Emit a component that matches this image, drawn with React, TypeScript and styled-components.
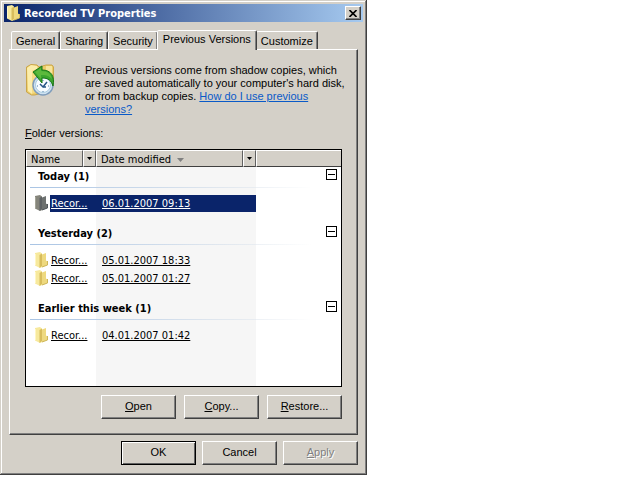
import React, { useState } from "react";
import styled, { createGlobalStyle, css } from "styled-components";

const face = "#d4d0c8";
const ui = '"Liberation Sans", Arial, sans-serif';
const shell = '"DejaVu Sans Condensed", Tahoma, sans-serif';

const GlobalStyle = createGlobalStyle`
  * { box-sizing: border-box; }
  body { margin: 0; background: #fff; color: #000; font: 11px/13px ${ui}; }
  button { font: inherit; color: inherit; }
  svg { flex: none; }
`;

const raised = css`
  border: 1px solid;
  border-color: #fff #404040 #404040 #fff;
  box-shadow: inset -1px -1px #808080;
`;

const Dialog = styled.section`
  max-width: 367px;
  padding: 4px 4px 10px;
  background: ${face};
  box-shadow: inset -1px -1px #404040, inset 1px 1px ${face}, inset -2px -2px #808080, inset 2px 2px #fff;
`;

const TitleBar = styled.header`
  display: flex;
  align-items: center;
  height: 18px;
  padding: 0 2px;
  gap: 3px;
  background: linear-gradient(90deg, #0a246a, #a6caf0);
  color: #fff;
`;

const Title = styled.h1`
  flex: 1;
  margin: 0;
  padding-top: 1px;
  font: bold 11px/18px ${shell};
  white-space: nowrap;
`;

const CloseButton = styled.button`
  ${raised}
  display: grid;
  place-items: center;
  width: 16px;
  height: 14px;
  padding: 0;
  background: ${face};
  color: #000;
`;

const TabStrip = styled.div`
  display: flex;
  align-items: flex-end;
  height: 20px;
  margin: 7px 5px 0;
  padding-left: 2px;
`;

const Tab = styled.button<{ $active: boolean }>`
  position: relative;
  flex: none;
  height: ${(p) => (p.$active ? 20 : 18)}px;
  margin: ${(p) => (p.$active ? "0 -1px -1px" : "0")};
  padding: ${(p) => (p.$active ? "0 5px 2px" : "1px 4px 0")};
  border: 1px solid;
  border-color: #fff #404040 transparent #fff;
  border-bottom-width: 0;
  border-radius: 2px 2px 0 0;
  box-shadow: inset -1px 0 #808080;
  background: ${face};
  z-index: ${(p) => (p.$active ? 1 : 0)};
  white-space: nowrap;
`;

const Panel = styled.div`
  ${raised}
  margin: 0 5px;
  padding: 14px 15px 15px;
`;

const Intro = styled.div`
  display: flex;
  gap: 28px;
  align-items: flex-start;
`;

const IntroText = styled.p`
  flex: 1;
  min-width: 0;
  margin: 0;
  white-space: nowrap;
`;

const HelpLink = styled.a`
  color: #0a5ac8;
`;

const ListLabel = styled.h2`
  margin: 11px 0 9px;
  font: inherit;
`;

const ListBox = styled.div`
  height: 238px;
  border: 1px solid #000;
  background: linear-gradient(90deg, #fff 70px, #f6f6f6 70px, #f6f6f6 230px, #fff 230px);
`;

const Table = styled.table`
  width: 100%;
  table-layout: fixed;
  border-collapse: collapse;
  font: 11px/14px ${shell};
  td, th { padding: 0; text-align: left; }
`;

const Col = styled.col<{ $width?: number }>`
  width: ${(p) => (p.$width ? `${p.$width}px` : "auto")};
`;

const HeaderCell = styled.th`
  height: 17px;
  background: ${face};
  font-weight: normal;
`;

const HeaderParts = styled.div`
  display: flex;
  height: 17px;
`;

const headPart = css`
  height: 17px;
  background: ${face};
  border: 1px solid;
  border-color: #fff #606060 #404040 #fff;
`;

const HeaderButton = styled.button`
  ${headPart}
  display: flex;
  flex: 1;
  align-items: center;
  gap: 6px;
  padding: 2px 4px 0;
`;

const FilterButton = styled.button`
  ${headPart}
  display: grid;
  place-items: center;
  width: 13px;
  padding: 0;
`;

const HeaderFill = styled.div`
  ${headPart}
  border-right: 0;
`;

const GroupHead = styled.th`
  height: 21px;
`;

const GroupBar = styled.div`
  display: flex;
  align-items: center;
  justify-content: space-between;
  height: 21px;
  margin: 0 4px;
  padding: 0 0 1px 8px;
  background: linear-gradient(90deg, #a9c4e4, #dfe6ee 60%, transparent 92%) bottom / 100% 1px no-repeat;
`;

const Toggle = styled.button`
  display: grid;
  place-items: center;
  align-self: flex-start;
  width: 11px;
  height: 11px;
  margin-top: 2px;
  padding: 0;
  border: 1px solid #000;
  background: #fff;
`;

const Gap = styled.td<{ $height: number }>`
  height: ${(p) => p.$height}px;
`;

const VersionRow = styled.tr<{ $selected: boolean }>`
  height: 18px;
  cursor: pointer;
  color: ${(p) => (p.$selected ? "#fff" : "#000")};
`;

const NameCell = styled.div`
  display: flex;
  align-items: center;
  height: 18px;
  padding-left: 8px;
  gap: 1px;
`;

const Mark = styled.span<{ $selected: boolean }>`
  display: flex;
  align-items: center;
  flex: 1;
  height: 17px;
  padding: 2px 0 0 1px;
  background: ${(p) => (p.$selected ? "#0a246a" : "transparent")};
`;

const DateMark = styled(Mark)`
  padding-left: 6px;
`;

const VersionLink = styled.a`
  color: inherit;
  text-underline-offset: 1px;
`;

const ButtonRow = styled.div<{ $gap: number }>`
  display: flex;
  justify-content: flex-end;
  gap: ${(p) => p.$gap}px;
`;

const Actions = styled(ButtonRow)`
  margin-top: 8px;
`;

const Footer = styled(ButtonRow)`
  margin: 6px 5px 0;
`;

const PushButton = styled.button<{ $primary?: boolean }>`
  ${raised}
  width: 75px;
  height: 24px;
  padding: 0 0 2px;
  background: ${face};
  outline: ${(p) => (p.$primary ? "1px solid #000" : "none")};
  outline-offset: -1px;
  ${(p) => p.$primary && "box-shadow: inset 1px 1px #fff, inset -1px -1px #606060;"}
  &:disabled {
    color: #808080;
    text-shadow: 1px 1px #fff;
  }
`;

const FolderIcon = ({ dark = false }: { dark?: boolean }) => {
  const [back, front, edge, shade] = dark
    ? ["#85857c", "#6d7170", "#50565c", "#5d6164"]
    : ["#f7e99d", "#eed97f", "#cdb65a", "#d8bd5c"];
  return (
    <svg width="15" height="16" viewBox="0 0 15 16" aria-hidden="true">
      <path d="M1 1 6 0 8 1.5V13l4-1v1.5L6 16l-5-2.5z" fill={back} />
      <path d="M5.5 3 8 1.5V14l-2.5 2z" fill={shade} />
      <path d="M8 2.5 12 1v7.5l1.5 1V13L8 15z" fill={front} />
      <path d="M1.5 2v11" stroke={dark ? "#a3a396" : "#fff6c3"} />
      <path d="m8 15 5.5-2V9" fill="none" stroke={edge} />
    </svg>
  );
};

const HistoryIcon = () => (
  <svg width="32" height="34" viewBox="0 0 32 34" aria-hidden="true">
    <path d="M1.5 3 6 .5l6 .5 2 2 7-2h6l1.5 2v18l-6 7-13 3-3 0-5-3z" fill="#eccb68" stroke="#caa64a" />
    <path d="m2 4 4-3 6 1 1 3-6 2v23l-4-3z" fill="#fbedab" />
    <path d="m7 7 7-3v22l-7 4z" fill="#f6dc83" />
    <path d="m21 2 6 0v18l-6 2z" fill="#f7e49a" />
    <circle cx="18" cy="21" r="10" fill="#cfe2f1" stroke="#7e9cbb" strokeWidth="1.5" />
    <circle cx="18" cy="21" r="7.5" fill="#f7fcff" stroke="#abcce0" />
    <path d="m15 20 3 3 4-5M18 23h3" fill="none" stroke="#235485" strokeWidth="1.5" />
    <path d="M18 16v1M18 27v1M12 22h1M23 22h1" stroke="#4c7caa" />
    <path d="m8 8 9-6v4c9 0 13 6 11 16-2-6-5-8-11-8v5z" fill="#3ba52e" stroke="#177717" />
    <path d="m10 8 6-4v3c7 0 10 3 11 8-4-4-7-4-11-4v4z" fill="#5cb93c" />
  </svg>
);

const Down = () => (
  <svg width="5" height="3" viewBox="0 0 5 3" aria-hidden="true"><path d="M0 0h5L2.5 3z" /></svg>
);

const tabs = ["General", "Sharing", "Security", "Previous Versions", "Customize"];
const groups = [
  { title: "Today (1)", dates: ["06.01.2007 09:13"] },
  { title: "Yesterday (2)", dates: ["05.01.2007 18:33", "05.01.2007 01:27"] },
  { title: "Earlier this week (1)", dates: ["04.01.2007 01:42"] },
];

export default function App() {
  const [active, setActive] = useState("Previous Versions");
  const [selected, setSelected] = useState("06.01.2007 09:13");
  const [closed, setClosed] = useState<string[]>([]);
  const toggle = (t: string) =>
    setClosed((c) => (c.includes(t) ? c.filter((x) => x !== t) : [...c, t]));

  return (
    <>
      <GlobalStyle />
      <Dialog role="dialog" aria-labelledby="title">
        <TitleBar>
          <FolderIcon />
          <Title id="title">Recorded TV Properties</Title>
          <CloseButton aria-label="Close">
            <svg width="8" height="7" viewBox="0 0 8 7" aria-hidden="true">
              <path d="m.5 0 7 7m0-7-7 7" stroke="#000" strokeWidth="1.6" />
            </svg>
          </CloseButton>
        </TitleBar>
        <TabStrip role="tablist">
          {tabs.map((t) => (
            <Tab key={t} role="tab" aria-selected={t === active} $active={t === active} onClick={() => setActive(t)}>
              {t}
            </Tab>
          ))}
        </TabStrip>
        <Panel role="tabpanel">
          <Intro>
            <HistoryIcon />
            <IntroText>
              Previous versions come from shadow copies, which<br />
              are saved automatically to your computer's hard disk,<br />
              or from backup copies. <HelpLink href="#help">How do I use previous<br />versions?</HelpLink>
            </IntroText>
          </Intro>
          <ListLabel id="versions"><u>F</u>older versions:</ListLabel>
          <ListBox>
            <Table aria-labelledby="versions">
              <colgroup><Col $width={70} /><Col $width={160} /><Col /></colgroup>
              <thead>
                <tr>
                  <HeaderCell>
                    <HeaderParts>
                      <HeaderButton>Name</HeaderButton>
                      <FilterButton aria-label="Filter by name"><Down /></FilterButton>
                    </HeaderParts>
                  </HeaderCell>
                  <HeaderCell>
                    <HeaderParts>
                      <HeaderButton>
                        Date modified
                        <svg width="7" height="4" viewBox="0 0 7 4" aria-hidden="true"><path d="M0 0h7L3.5 4z" fill="#808080" /></svg>
                      </HeaderButton>
                      <FilterButton aria-label="Filter by date"><Down /></FilterButton>
                    </HeaderParts>
                  </HeaderCell>
                  <HeaderCell><HeaderFill /></HeaderCell>
                </tr>
              </thead>
              {groups.map((g) => (
                <tbody key={g.title}>
                  <tr>
                    <GroupHead colSpan={3}>
                      <GroupBar>
                        {g.title}
                        <Toggle aria-label={`Toggle ${g.title}`} onClick={() => toggle(g.title)}>
                          <svg width="7" height="1" aria-hidden="true"><rect width="7" height="1" /></svg>
                        </Toggle>
                      </GroupBar>
                    </GroupHead>
                  </tr>
                  <tr><Gap colSpan={3} $height={6} /></tr>
                  {!closed.includes(g.title) && g.dates.map((d) => {
                    const on = d === selected;
                    return (
                      <VersionRow key={d} $selected={on} onClick={() => setSelected(d)}>
                        <td>
                          <NameCell>
                            <FolderIcon dark={on} />
                            <Mark $selected={on}><VersionLink href="#version">Recor...</VersionLink></Mark>
                          </NameCell>
                        </td>
                        <td><DateMark $selected={on}><VersionLink href="#version">{d}</VersionLink></DateMark></td>
                        <td />
                      </VersionRow>
                    );
                  })}
                  <tr><Gap colSpan={3} $height={12} /></tr>
                </tbody>
              ))}
            </Table>
          </ListBox>
          <Actions $gap={8}>
            <PushButton><u>O</u>pen</PushButton>
            <PushButton><u>C</u>opy...</PushButton>
            <PushButton><u>R</u>estore...</PushButton>
          </Actions>
        </Panel>
        <Footer $gap={6}>
          <PushButton $primary>OK</PushButton>
          <PushButton>Cancel</PushButton>
          <PushButton disabled><u>A</u>pply</PushButton>
        </Footer>
      </Dialog>
    </>
  );
}
